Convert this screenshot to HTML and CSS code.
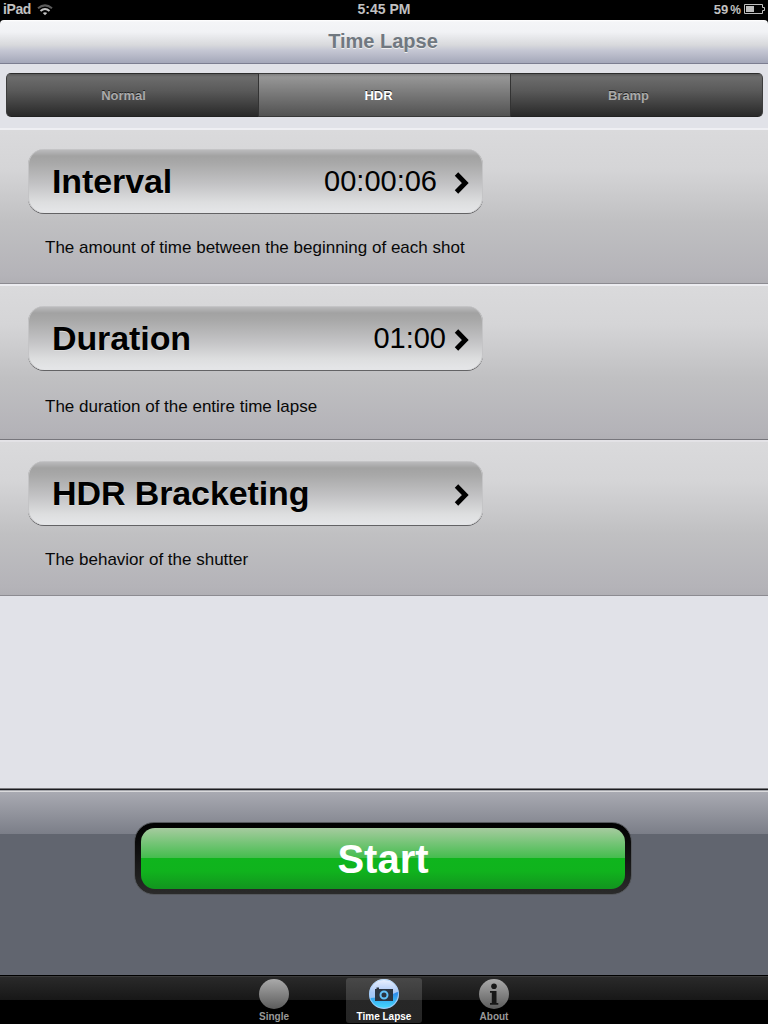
FILE: index.html
```html
<!DOCTYPE html>
<html lang="en">
<head>
<meta charset="utf-8">
<title>Time Lapse</title>
<link rel="stylesheet" href="styles.css">
</head>
<body>
<div class="screen">
  <header class="status">
    <div class="status-left"><span>iPad</span>
      <svg class="wifi" width="16" height="12" viewBox="0 0 16 12" fill="none"><path d="M1 4.300Q8-1.500 15 4.300" stroke="#5c5c5c" stroke-width="2"/><path d="M3.500 7Q8 3 12.500 7" stroke="#c4c4c4" stroke-width="2"/><path d="M5.800 9Q8 7.300 10.200 9L8 11.300Z" fill="#c4c4c4"/></svg>
    </div>
    <div class="status-time">5:45 PM</div>
    <div class="status-right"><span>59<i class="pct">%</i></span>
      <svg width="21" height="10" viewBox="0 0 21 10"><path d="M.5.500H18.500V3.500H20.500V6.500H18.500V9.500H.5Z" fill="none" stroke="#bdbdbd"/><path d="M2 2H10V8H2Z" fill="#bdbdbd"/></svg>
    </div>
  </header>
  <div class="nav-wrap"><h1 class="nav"><span>Time Lapse</span></h1></div>
  <nav class="segments">
    <div class="segment"><span>Normal</span></div>
    <div class="segment active"><span>HDR</span></div>
    <div class="segment"><span>Bramp</span></div>
  </nav>
  <main class="rows">
    <section class="row row-interval">
      <button class="field"><span class="name">Interval</span><span class="value wide">00:00:06</span><svg class="chevron" width="16" height="22" viewBox="0 0 16 22"><path d="M2.500 2L11.300 11L2.500 20" fill="none" stroke="#000" stroke-width="4.800"/></svg></button>
      <p class="note">The amount of time between the beginning of each shot</p>
    </section>
    <section class="row row-duration">
      <button class="field"><span class="name">Duration</span><span class="value">01:00</span><svg class="chevron" width="16" height="22" viewBox="0 0 16 22"><path d="M2.500 2L11.300 11L2.500 20" fill="none" stroke="#000" stroke-width="4.800"/></svg></button>
      <p class="note">The duration of the entire time lapse</p>
    </section>
    <section class="row row-hdr">
      <button class="field"><span class="name">HDR Bracketing</span><span class="value"></span><svg class="chevron" width="16" height="22" viewBox="0 0 16 22"><path d="M2.500 2L11.300 11L2.500 20" fill="none" stroke="#000" stroke-width="4.800"/></svg></button>
      <p class="note">The behavior of the shutter</p>
    </section>
  </main>
  <div class="actions">
    <div class="start-frame"><button class="start"><span>Start</span></button></div>
  </div>
  <footer class="tabs">
    <div class="tab">
      <svg width="32" height="32" viewBox="0 0 32 32"><defs><linearGradient id="gray" x2="0" y2="1"><stop stop-color="#aaa"/><stop offset="1" stop-color="#5c5c5c"/></linearGradient></defs><circle cx="16" cy="16" r="15" fill="url(#gray)"/></svg>
      <span>Single</span>
    </div>
    <div class="tab selected">
      <svg width="32" height="32" viewBox="0 0 32 32"><defs><linearGradient id="blue" x2="0" y2="1"><stop stop-color="#eef3ff"/><stop offset=".45" stop-color="#a9c8f7"/><stop offset="1" stop-color="#8fc4f8"/></linearGradient><linearGradient id="deep" x2="0" y2="1"><stop stop-color="#2a82ea"/><stop offset="1" stop-color="#45d8fc"/></linearGradient></defs><circle cx="16" cy="16" r="15" fill="url(#blue)"/><path d="M1.500 20Q18 20 30.500 13.500A15 15 0 0 1 1.500 20Z" fill="url(#deep)"/><circle cx="16" cy="16" r="14.500" fill="none" stroke="#9fcdf7" stroke-opacity=".7"/><path d="M7 11H8.500V9.500H11V11H25V23H7Z" fill="#2b3440"/><circle cx="16" cy="17" r="3.500" fill="#2b3440" stroke="#62c2f8" stroke-width="2"/></svg>
      <span>Time Lapse</span>
    </div>
    <div class="tab">
      <svg width="32" height="32" viewBox="0 0 32 32"><circle cx="16" cy="16" r="15" fill="url(#gray)"/><circle cx="16" cy="8.300" r="2.800" fill="#171717"/><path d="M12 13H18.500V25H20.300V26.800H12V25H13.800V14.800H12Z" fill="#171717"/></svg>
      <span>About</span>
    </div>
  </footer>
</div>
</body>
</html>
```
FILE: styles.css
```css
* { box-sizing: border-box; }
body { margin: 0; background: #000; font-family: "Liberation Sans", Arial, sans-serif; }
button { font: inherit; padding: 0; margin: 0; border: 0; }
.screen { width: 768px; height: 1024px; display: flex; flex-direction: column; overflow: hidden; background: #e1e2e8; }

.status { height: 20px; background: #000; color: #c1c1c1; font-weight: bold; font-size: 14px; line-height: 19px; display: grid; grid-template-columns: 1fr auto 1fr; }
.status-left { padding-left: 3px; display: flex; gap: 6px; }
.status-left span { letter-spacing: -0.4px; }
.wifi { margin-top: 4px; }
.status-right { display: flex; justify-content: flex-end; gap: 3px; padding-right: 3px; font-size: 13px; }
.status-right svg { margin-top: 4px; }
.pct { font-style: normal; font-size: 12px; margin-left: 2px; }

.nav-wrap { background: #000; }
.nav { margin: 0; height: 44px; border-radius: 4px 4px 0 0; border-bottom: 1px solid #7c7e91; background: linear-gradient(#fff 0, #f4f5f7 2px, #f1f2f5 12px, #d8d9dc 25px, #c6c8d4 30px, #a4a7b9 43px); color: #707880; font-size: 20px; line-height: 42px; text-align: center; text-shadow: 0 1px 0 #eee; }
.nav span { padding-right: 2px; }

.segments { height: 64px; padding: 9px 5px 11px 6px; display: grid; grid-template-columns: 252px 253px 252px; }
.segment { height: 44px; background: linear-gradient(#2d2d2d 0 1px, #5a5a5a 1px, #6c6c6c 4px, #5a5a5a 40%, #292929 43px, #222 43px); color: #aaa; font-size: 13px; font-weight: bold; line-height: 46px; text-align: center; text-shadow: 0 -1px 0 #222; }
.segment span { letter-spacing: -0.05px; }
.segment:first-child { border-left: 1px solid #3c3c3c; border-radius: 5px 0 0 5px; padding-right: 18px; }
.segment:last-child { border-right: 1px solid #3c3c3c; border-radius: 0 5px 5px 0; padding-right: 16px; }
.segment.active { border-left: 1px solid #333; border-right: 1px solid #333; padding-right: 12px; color: #fff; background: linear-gradient(#3a3a3a 0 1px, #808080 1px, #969696 4px, #525252 43px, #383838 43px); }

.rows { height: 660px; }
.row { height: 156px; padding-left: 28px; background: linear-gradient(#dadadc, #d5d5d7 25%, #c0c0c2 60%, #b4b3b8 95%, #b0afb4); border-top: 2px solid #efeff3; border-bottom: 1px solid #8c8b91; }
.row-interval { padding-top: 19px; }
.row-duration { padding-top: 20px; border-top-color: #ececf0; border-bottom-color: #77767c; }
.row-hdr { padding-top: 19px; border-top-color: #e3e2e6; }
.field { width: 455px; height: 64px; display: flex; align-items: center; padding: 0 13px 0 24px; border-radius: 16px; color: #000; background: linear-gradient(#c4c4c6 0 1px, #bababc 1px, #a2a2a2 7px, #a8a8a8 14px, #c4c4c6 36px, #dddedf 53px, #e4e5e7 62px); box-shadow: inset 1px 0 0 #c4c4c6, inset -1px 0 0 #c4c4c6, 0 1px 0 #636365; }
.name { flex: 1; text-align: left; font-weight: bold; font-size: 34px; letter-spacing: -0.1px; line-height: 40px; text-shadow: 0 1px 0 #ddd; }
.value { font-size: 29px; line-height: 40px; margin-right: 8px; }
.value.wide { margin-right: 17px; }
.chevron { margin-top: 3px; }
.name, .value { padding-bottom: 1px; }
.note { margin: 25px 0 0 17px; font-size: 17px; line-height: 20px; color: #080808; }
.row-duration .note { margin-top: 27px; }

.actions { height: 187px; padding: 34px 0 0 134px; background: linear-gradient(#78787c 0 1px, #1b1b1f 1px 2px, #a5a6ab 2px 3px, #dadadc 3px 4px, #a9aab2 4px, #7b7e88 46px, #61656f 46px); }
.start-frame { width: 498px; height: 73px; padding: 5px 6px 6px; border: 1px solid #55585d; border-radius: 20px; background: linear-gradient(#000, #101010 40%, #2b2b2b); }
.start { display: block; width: 484px; height: 61px; border-radius: 14px; color: #fff; font-weight: bold; font-size: 40px; line-height: 62px; background: linear-gradient(#a6cb9f, #44bd4e 30px, #0fb51d 30px, #10b31d 43px, #12961f 60px); }

.tabs { height: 49px; display: flex; justify-content: center; gap: 34px; padding-top: 2px; border-top: 1px solid #000; background: linear-gradient(#3b3b3b 0 1px, #2a2a2a 1px, #171717 24px, #000 24px); }
.tab { width: 76px; height: 45px; display: flex; flex-direction: column; align-items: center; color: #999; font-size: 10px; font-weight: bold; line-height: 11px; }
.tab.selected { color: #fff; border-radius: 3px; background: linear-gradient(#484848, #393939 22px, #272727 22px, #252525); }
.tab svg { display: block; }
.tab span { white-space: nowrap; margin-top: 1px; }
```
